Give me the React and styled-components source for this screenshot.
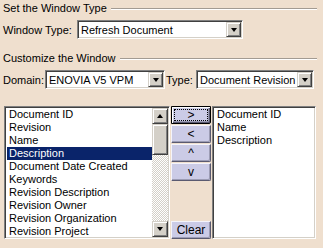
import React from "react";
import styled, { createGlobalStyle } from "styled-components";

const GlobalStyle = createGlobalStyle`
  html, body {
    margin: 0;
    padding: 0;
    background: #efdfce;
  }
  body {
    font-family: "Liberation Sans", Arial, sans-serif;
    font-size: 11px;
    color: #000;
  }
`;

const AVAILABLE = [
  "Document ID",
  "Revision",
  "Name",
  "Description",
  "Document Date Created",
  "Keywords",
  "Revision Description",
  "Revision Owner",
  "Revision Organization",
  "Revision Project",
];

const SELECTED = ["Document ID", "Name", "Description"];

const Panel = styled.div`
  width: 323px;
  height: 248px;
  box-sizing: border-box;
  padding: 2px 6px 0 3px;
  display: flex;
  flex-direction: column;
`;

const GroupTitle = styled.div`
  display: flex;
  align-items: center;
  gap: 4px;
  height: 13px;
  line-height: 13px;
  margin-top: ${(p) => p.$top || 0}px;
  white-space: nowrap;

  &::after {
    content: "";
    flex: 1;
    border-top: 1px solid #a39b92;
    border-bottom: 1px solid #fff;
  }
`;

const FieldRow = styled.div`
  display: flex;
  align-items: center;
  margin-top: ${(p) => p.$top || 0}px;
`;

const Label = styled.span`
  white-space: nowrap;
  flex: none;
  width: ${(p) => (p.$width ? `${p.$width}px` : "auto")};
  margin-left: ${(p) => p.$left || 0}px;
  margin-right: ${(p) => p.$gap || 0}px;
`;

const Combo = styled.div`
  width: ${(p) => p.$width}px;
  height: 19px;
  box-sizing: border-box;
  flex: none;
  display: flex;
  align-items: center;
  background: #fff;
  border: 1px solid;
  border-color: #808080 #fff #fff #808080;
  box-shadow: inset 1px 1px 0 #404040, inset -1px -1px 0 #d4d0c8;
  padding: 1px 1px 1px 2px;
`;

const ComboText = styled.span`
  flex: 1;
  white-space: nowrap;
  overflow: hidden;
  padding-left: 1px;
`;

const DropButton = styled.div`
  width: 15px;
  height: 15px;
  flex: none;
  box-sizing: border-box;
  background: #d4d0c8;
  border: 1px solid;
  border-color: #d4d0c8 #404040 #404040 #d4d0c8;
  box-shadow: inset 1px 1px 0 #fff, inset -1px -1px 0 #808080;
  display: flex;
  align-items: center;
  justify-content: center;

  &::before {
    content: "";
    width: 0;
    height: 0;
    border-left: 3.5px solid transparent;
    border-right: 3.5px solid transparent;
    border-top: 4px solid #000;
    transform: ${(p) => (p.$up ? "rotate(180deg)" : "none")};
  }
`;

const ListArea = styled.div`
  display: grid;
  grid-template-columns: 166px 42px 104px;
  height: 133px;
  margin-top: 17px;
  margin-left: 1px;
`;

const ListBox = styled.div`
  display: flex;
  box-sizing: border-box;
  height: 100%;
  background: #fff;
  border: 1px solid;
  border-color: #808080 #fff #fff #808080;
  box-shadow: inset 1px 1px 0 #404040, inset -1px -1px 0 #d4d0c8;
  padding: 1px;
  overflow: hidden;
`;

const Items = styled.div`
  flex: 1;
  overflow: hidden;
`;

const Item = styled.div`
  height: 13px;
  line-height: 13px;
  margin-left: 1px;
  padding-left: 2px;
  white-space: nowrap;
  background: ${(p) => (p.$selected ? "#0a246a" : "transparent")};
  color: ${(p) => (p.$selected ? "#fff" : "#000")};
`;

const ScrollBar = styled.div`
  width: 16px;
  display: flex;
  flex-direction: column;
`;

const ScrollArrow = styled(DropButton)`
  width: 16px;
  height: 16px;
`;

const Track = styled.div`
  flex: 1;
  background-color: #fff;
  background-image: repeating-conic-gradient(#d4d0c8 0 25%, #fff 0 50%);
  background-size: 2px 2px;
`;

const Thumb = styled.div`
  height: 31px;
  box-sizing: border-box;
  background: #d4d0c8;
  border: 1px solid;
  border-color: #d4d0c8 #404040 #404040 #d4d0c8;
  box-shadow: inset 1px 1px 0 #fff, inset -1px -1px 0 #808080;
`;

const ButtonColumn = styled.div`
  display: flex;
  flex-direction: column;
  gap: 1px;
  padding: 0 1px;
`;

const MoveButton = styled.div`
  height: 18px;
  box-sizing: border-box;
  display: flex;
  align-items: center;
  justify-content: center;
  background: #cbcbe6;
  border: 1px solid;
  border-color: ${(p) =>
    p.$default ? "#000" : "#f4f4fb #5a5a70 #5a5a70 #f4f4fb"};
  box-shadow: ${(p) =>
    p.$default
      ? "inset 1px 1px 0 #fff, inset -1px -1px 0 #5a5a70, inset -2px -2px 0 #9c9cb4"
      : "inset -1px -1px 0 #9c9cb4"};
  border-radius: 0 0 2px 0;
  font-size: 12px;
  margin-top: ${(p) => (p.$bottom ? "auto" : "0")};
`;

const FocusRect = styled.span`
  display: flex;
  align-items: center;
  justify-content: center;
  width: 32px;
  height: 10px;
  border: 1px dotted #000;
  line-height: 10px;
`;

export default function App() {
  return (
    <>
      <GlobalStyle />
      <Panel>
        <GroupTitle>Set the Window Type</GroupTitle>
        <FieldRow $top={5}>
          <Label $width={74}>Window Type:</Label>
          <Combo $width={166}>
            <ComboText>Refresh Document</ComboText>
            <DropButton />
          </Combo>
        </FieldRow>

        <GroupTitle $top={13}>Customize the Window</GroupTitle>
        <FieldRow $top={5}>
          <Label $width={42}>Domain:</Label>
          <Combo $width={120}>
            <ComboText>ENOVIA V5 VPM</ComboText>
            <DropButton />
          </Combo>
          <Label $left={1} $width={30}>
            Type:
          </Label>
          <Combo $width={118}>
            <ComboText>Document Revision</ComboText>
            <DropButton />
          </Combo>
        </FieldRow>

        <ListArea>
          <ListBox>
            <Items>
              {AVAILABLE.map((name) => (
                <Item key={name} $selected={name === "Description"}>
                  {name}
                </Item>
              ))}
            </Items>
            <ScrollBar>
              <ScrollArrow $up />
              <Track>
                <Thumb />
              </Track>
              <ScrollArrow />
            </ScrollBar>
          </ListBox>

          <ButtonColumn>
            <MoveButton $default>
              <FocusRect>&gt;</FocusRect>
            </MoveButton>
            <MoveButton>&lt;</MoveButton>
            <MoveButton>^</MoveButton>
            <MoveButton>v</MoveButton>
            <MoveButton $bottom>Clear</MoveButton>
          </ButtonColumn>

          <ListBox>
            <Items>
              {SELECTED.map((name) => (
                <Item key={name}>{name}</Item>
              ))}
            </Items>
          </ListBox>
        </ListArea>
      </Panel>
    </>
  );
}
